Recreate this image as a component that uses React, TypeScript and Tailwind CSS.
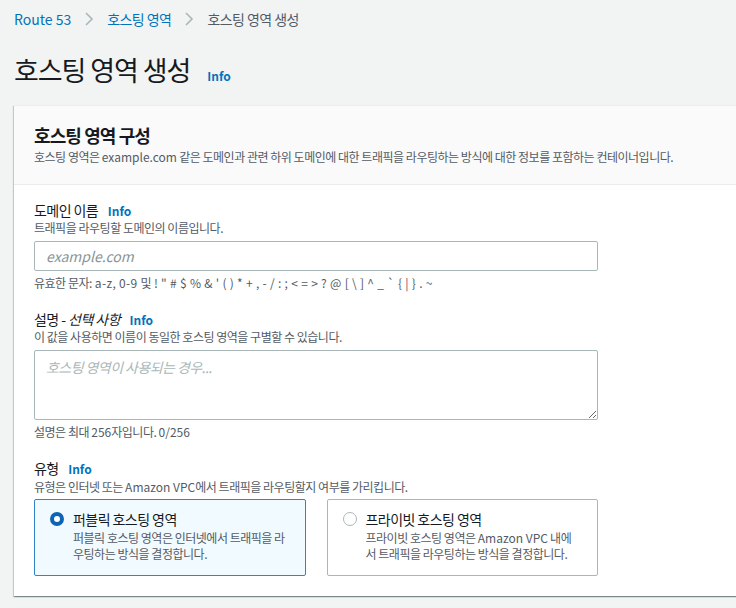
import React, { useState } from "react";

const L = ({ children }: { children: React.ReactNode }) => (
  <span className="tracking-normal">{children}</span>
);

const Info = () => (
  <span className="tracking-normal text-[12px] font-bold text-[#0073bb] ml-[7px]">Info</span>
);

function Chevron() {
  return (
    <svg width="10" height="14" viewBox="0 0 10 14" className="mx-[13px]">
      <polyline points="2,1 8,7 2,13" fill="none" stroke="#aab7b8" strokeWidth="1.6" />
    </svg>
  );
}

function Radio({ checked }: { checked: boolean }) {
  return checked ? (
    <span className="mt-[3px] w-[14px] h-[14px] rounded-full border-[4px] border-[#0d63b5] bg-white shrink-0" />
  ) : (
    <span className="mt-[3px] w-[14px] h-[14px] rounded-full border border-[#aab7b8] bg-white shrink-0" />
  );
}

export default function App() {
  const [type, setType] = useState("public");

  const tiles = [
    {
      id: "public",
      title: "퍼블릭 호스팅 영역",
      lines: ["퍼블릭 호스팅 영역은 인터넷에서 트래픽을 라", "우팅하는 방식을 결정합니다."],
    },
    {
      id: "private",
      title: "프라이빗 호스팅 영역",
      lines: [
        <>
          프라이빗 호스팅 영역은 <L>Amazon VPC</L> 내에
        </>,
        "서 트래픽을 라우팅하는 방식을 결정합니다.",
      ],
    },
  ];

  return (
    <div className="min-h-[608px] bg-[#f2f3f3] overflow-hidden font-['Noto_Sans_CJK_KR',sans-serif] text-[#16191f]">
      {/* Breadcrumbs */}
      <div className="flex items-center px-[14px] pt-[9px] h-[29px] text-[14px] leading-[20px] tracking-[-0.04em]">
        <span className="text-[#0073bb] tracking-normal">Route 53</span>
        <Chevron />
        <span className="text-[#0073bb]">호스팅 영역</span>
        <Chevron />
        <span className="text-[#545b64]">호스팅 영역 생성</span>
      </div>

      {/* Title */}
      <div className="flex items-baseline px-[14px] mt-[23px]">
        <h1 className="text-[27px] leading-[36px] font-normal tracking-[-0.04em]">호스팅 영역 생성</h1>
        <span className="ml-[17px] text-[12px] font-bold text-[#0073bb]">Info</span>
      </div>

      {/* Card */}
      <div className="mt-[17px] ml-[14px] w-[760px] bg-white border-t border-[#eaeded] shadow-[0_1px_1px_0_rgba(0,28,36,0.3),1px_1px_1px_0_rgba(0,28,36,0.15),-1px_1px_1px_0_rgba(0,28,36,0.15)]">
        <div className="bg-[#fafafa] border-b border-[#eaeded] px-[20px] pt-[17px] pb-[19px]">
          <h2 className="text-[18px] leading-[24px] font-bold tracking-[-0.05em]">호스팅 영역 구성</h2>
          <p className="mt-[2px] text-[12px] leading-[16px] text-[#545b64] tracking-[-0.04em]">
            호스팅 영역은 <L>example.com</L> 같은 도메인과 관련 하위 도메인에 대한 트래픽을 라우팅하는 방식에 대한 정보를 포함하는 컨테이너입니다.
          </p>
        </div>

        <div className="px-[20px] pt-[16px] pb-[20px] w-[604px]">
          {/* Domain name */}
          <div className="text-[14px] leading-[18px] tracking-[-0.04em]">
            도메인 이름 <Info />
          </div>
          <div className="text-[12px] leading-[16px] text-[#545b64] tracking-[-0.04em]">
            트래픽을 라우팅할 도메인의 이름입니다.
          </div>
          <input
            className="mt-[5px] block w-[564px] h-[30px] border border-[#aab7b8] rounded-[2px] px-[11px] text-[14px] outline-none placeholder:italic placeholder:text-[#879596]"
            placeholder="example.com"
          />
          <div className="mt-[4px] text-[12px] leading-[16px] text-[#545b64] tracking-[0.025em]">
            <span className="tracking-[-0.04em]">유효한 문자:</span> a-z, 0-9 <span className="tracking-[-0.04em]">및</span> ! " # $ % &amp; ' ( ) * + , - / : ; &lt; = &gt; ? @ [ \ ] ^ _ ` {"{"} | {"}"} . ~
          </div>

          {/* Description */}
          <div className="mt-[19px] text-[14px] leading-[18px] tracking-[-0.04em]">
            설명 - <i>선택 사항</i> <Info />
          </div>
          <div className="text-[12px] leading-[16px] text-[#545b64] tracking-[-0.04em]">
            이 값을 사용하면 이름이 동일한 호스팅 영역을 구별할 수 있습니다.
          </div>
          <textarea
            className="mt-[5px] block w-[564px] h-[70px] border border-[#aab7b8] rounded-[2px] px-[11px] py-[6px] text-[14px] leading-[20px] outline-none placeholder:italic placeholder:text-[#aab7b8] tracking-[-0.04em]"
            placeholder="호스팅 영역이 사용되는 경우..."
          />
          <div className="mt-[4px] text-[12px] leading-[16px] text-[#545b64] tracking-[-0.04em]">
            설명은 최대 <L>256</L>자입니다. <L>0/256</L>
          </div>

          {/* Type */}
          <div className="mt-[19px] text-[14px] leading-[18px] tracking-[-0.04em]">
            유형 <Info />
          </div>
          <div className="mt-[1px] text-[12px] leading-[16px] text-[#545b64] tracking-[-0.04em]">
            유형은 인터넷 또는 <L>Amazon VPC</L>에서 트래픽을 라우팅할지 여부를 가리킵니다.
          </div>
          <div className="mt-[4px] flex gap-[21px]">
            {tiles.map((t) => {
              const sel = type === t.id;
              return (
                <div
                  key={t.id}
                  onClick={() => setType(t.id)}
                  className={`w-[272px] h-[77px] border rounded-[2px] flex gap-[9px] pl-[15px] pt-[9px] cursor-pointer ${
                    sel ? "border-[#3184c9] bg-[#f1faff]" : "border-[#aab7b8] bg-white"
                  }`}
                >
                  <Radio checked={sel} />
                  <div>
                    <div className="text-[14px] leading-[20px] tracking-[-0.04em]">{t.title}</div>
                    <div className="mt-[1px] text-[12px] leading-[16px] text-[#545b64] tracking-[-0.04em]">
                      {t.lines.map((ln, i) => (
                        <div key={i} className="whitespace-nowrap">{ln}</div>
                      ))}
                    </div>
                  </div>
                </div>
              );
            })}
          </div>
        </div>
      </div>
    </div>
  );
}
